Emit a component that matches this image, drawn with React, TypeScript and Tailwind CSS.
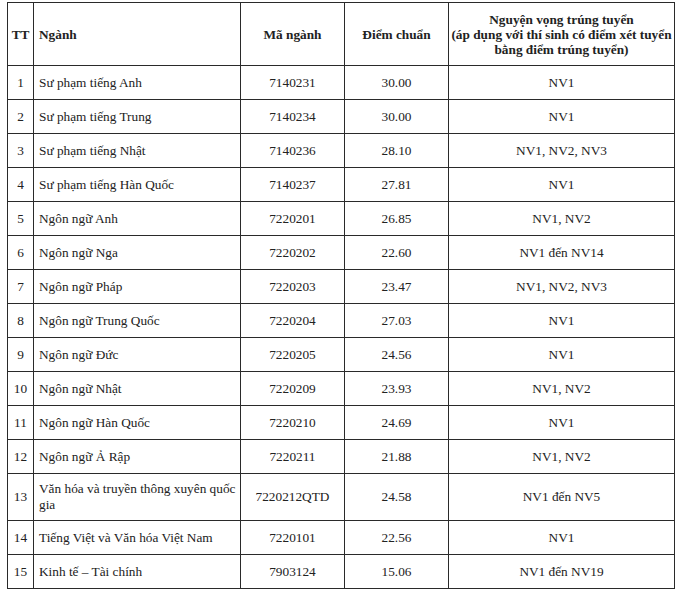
const rows: [string, string, string, string, string][] = [
  ["1", "Sư phạm tiếng Anh", "7140231", "30.00", "NV1"],
  ["2", "Sư phạm tiếng Trung", "7140234", "30.00", "NV1"],
  ["3", "Sư phạm tiếng Nhật", "7140236", "28.10", "NV1, NV2, NV3"],
  ["4", "Sư phạm tiếng Hàn Quốc", "7140237", "27.81", "NV1"],
  ["5", "Ngôn ngữ Anh", "7220201", "26.85", "NV1, NV2"],
  ["6", "Ngôn ngữ Nga", "7220202", "22.60", "NV1 đến NV14"],
  ["7", "Ngôn ngữ Pháp", "7220203", "23.47", "NV1, NV2, NV3"],
  ["8", "Ngôn ngữ Trung Quốc", "7220204", "27.03", "NV1"],
  ["9", "Ngôn ngữ Đức", "7220205", "24.56", "NV1"],
  ["10", "Ngôn ngữ Nhật", "7220209", "23.93", "NV1, NV2"],
  ["11", "Ngôn ngữ Hàn Quốc", "7220210", "24.69", "NV1"],
  ["12", "Ngôn ngữ Ả Rập", "7220211", "21.88", "NV1, NV2"],
  ["13", "Văn hóa và truyền thông xuyên quốc gia", "7220212QTD", "24.58", "NV1 đến NV5"],
  ["14", "Tiếng Việt và Văn hóa Việt Nam", "7220101", "22.56", "NV1"],
  ["15", "Kinh tế – Tài chính", "7903124", "15.06", "NV1 đến NV19"],
];

const cell = "border border-[#2a2a2a] align-middle";

export default function App() {
  return (
    <div className="h-[590px] w-[680px] bg-white pt-[2px] pl-[7px] font-['Liberation_Serif',serif] text-[13.3px] text-[#222]">
      <table className="w-[667px] table-fixed border-collapse">
        <colgroup>
          <col className="w-[26px]" />
          <col className="w-[207px]" />
          <col className="w-[104px]" />
          <col className="w-[104px]" />
          <col className="w-[226px]" />
        </colgroup>
        <thead>
          <tr className="h-[63px] font-bold leading-[15px]">
            <th className={`${cell} text-center`}>TT</th>
            <th className={`${cell} pl-[5px] text-left`}>Ngành</th>
            <th className={`${cell} text-center`}>Mã ngành</th>
            <th className={`${cell} text-center`}>Điểm chuẩn</th>
            <th className={`${cell} text-center`}>
              Nguyện vọng trúng tuyển
              <br />
              (áp dụng với thí sinh có điểm xét tuyển
              <br />
              bằng điểm trúng tuyển)
            </th>
          </tr>
        </thead>
        <tbody>
          {rows.map(([tt, name, code, score, nv]) => (
            <tr key={tt} className={tt === "13" ? "h-[47px]" : "h-[34px]"}>
              <td className={`${cell} text-center`}>{tt}</td>
              <td className={`${cell} pl-[5px] pr-1 text-left leading-[16px]`}>{name}</td>
              <td className={`${cell} text-center`}>{code}</td>
              <td className={`${cell} text-center`}>{score}</td>
              <td className={`${cell} text-center`}>{nv}</td>
            </tr>
          ))}
        </tbody>
      </table>
      <div className="-ml-[7px] mt-[1px] h-[1px] w-[680px] bg-[#bbb]" />
    </div>
  );
}
